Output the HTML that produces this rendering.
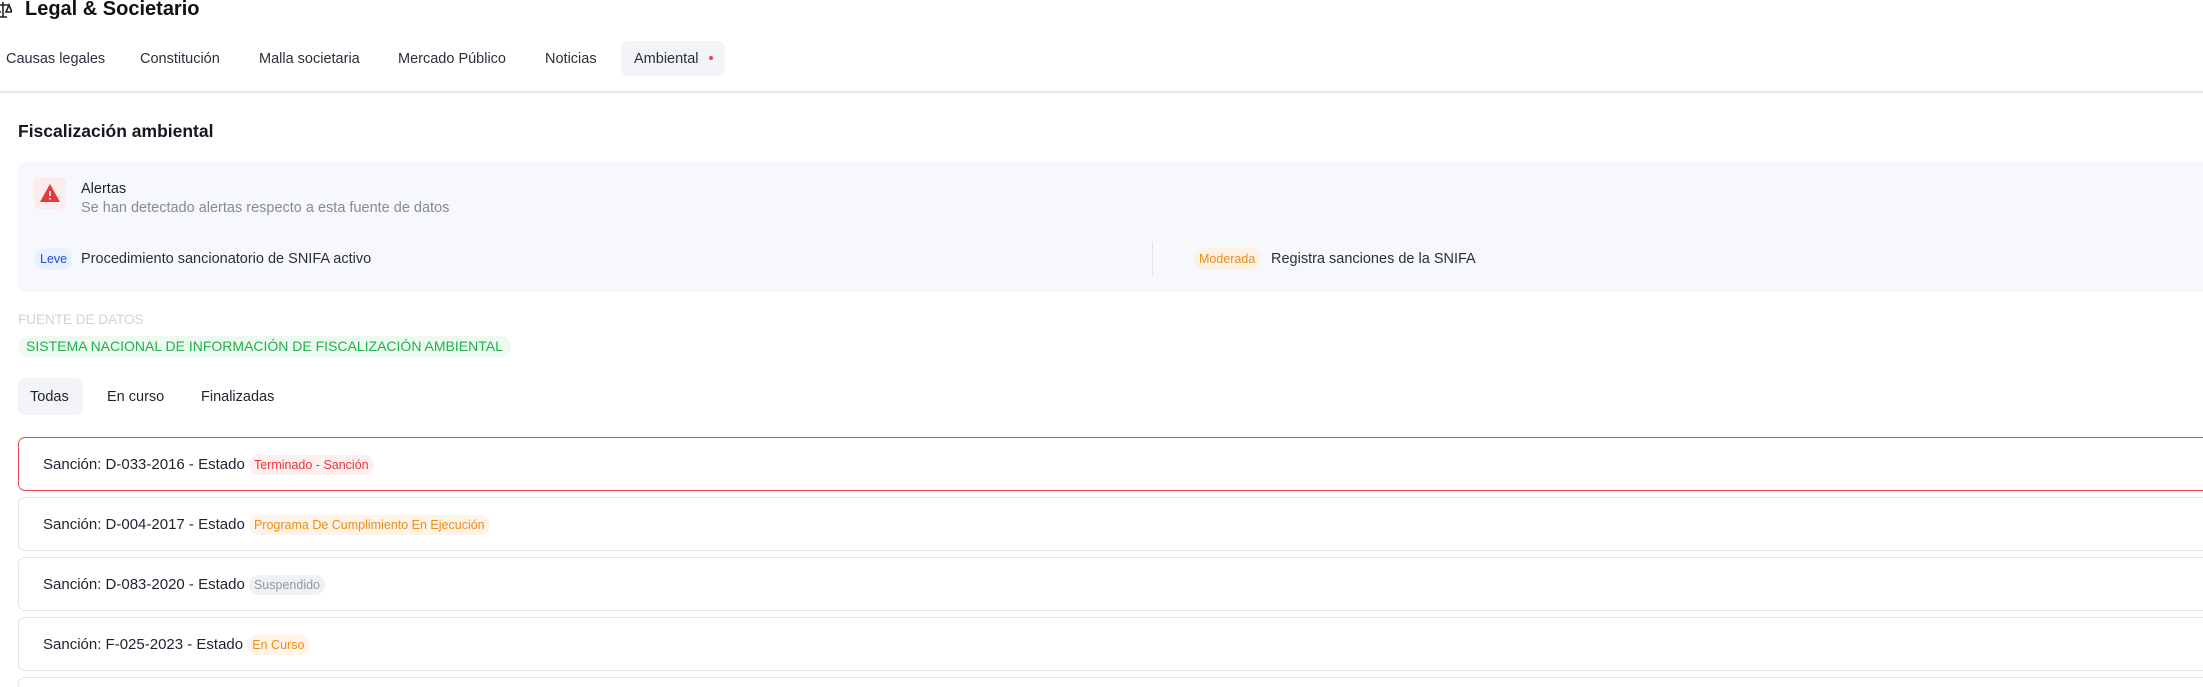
<!DOCTYPE html>
<html><head><meta charset="utf-8"><style>
*{box-sizing:border-box;margin:0;padding:0}
html,body{width:2203px;height:687px;overflow:hidden}
body{background:#fff;font-family:"Liberation Sans",sans-serif;color:#1f2330;position:relative}
.a{position:absolute;white-space:nowrap}
.tab{position:absolute;top:51px;font-size:14.5px;color:#2b2f3a}
.badge{display:inline-block;font-size:12.5px;padding:0 5px;height:20px;line-height:20px;border-radius:10px;vertical-align:middle}
.card{position:absolute;left:18px;width:2185px;height:54px;border:1.5px solid #e1e3e8;border-right:none;border-radius:7px 0 0 7px;}
.card span.t{position:absolute;left:24px;top:17px;font-size:15px;color:#1f2330}
</style></head><body>
<svg class="a" style="left:-6px;top:1px" width="18" height="18" viewBox="0 0 18 18" fill="none" stroke="#222" stroke-width="1.6"><path d="M9 1v15M3 4h12M3 4l-3 7h6zM15 4l-3 7h6zM5 16h8"/></svg>
<div class="a" style="left:25px;top:-2px;font-size:20px;font-weight:bold;color:#111">Legal &amp; Societario</div>
<div class="tab" style="left:6px">Causas legales</div>
<div class="tab" style="left:140px">Constitución</div>
<div class="tab" style="left:259px">Malla societaria</div>
<div class="tab" style="left:398px">Mercado Público</div>
<div class="tab" style="left:545px">Noticias</div>
<div class="a" style="left:621px;top:41px;width:104px;height:35px;background:#f3f4f8;border-radius:7px"></div>
<div class="tab" style="left:634px">Ambiental</div>
<div class="a" style="left:709px;top:56px;width:4px;height:4px;border-radius:2px;background:#e5484d"></div>
<div class="a" style="left:0;top:91px;width:2203px;height:1.5px;background:#e4e5ea"></div>
<div class="a" style="left:18px;top:121px;font-size:17.5px;font-weight:bold;color:#151821">Fiscalización ambiental</div>
<div class="a" style="left:18px;top:162px;width:2185px;height:130px;background:#f6f8fc;border-radius:7px 0 0 7px"></div>
<div class="a" style="left:34px;top:177px;width:32px;height:32px;background:#fdecec;border-radius:5px"></div>
<svg class="a" style="left:39px;top:183px" width="22" height="20" viewBox="0 0 22 20"><path d="M11 1L21 19H1z" fill="#e5383b"/><path d="M11 8v5M11 15v1.5" stroke="#fff" stroke-width="1.6"/></svg>
<div class="a" style="left:81px;top:181px;font-size:14.5px;color:#1f2330">Alertas</div>
<div class="a" style="left:81px;top:200px;font-size:14.5px;color:#868b97">Se han detectado alertas respecto a esta fuente de datos</div>
<div class="a" style="left:35px;top:248px"><span class="badge" style="background:#e9f0fd;color:#1d4ed8;height:22px;line-height:22px">Leve</span></div>
<div class="a" style="left:81px;top:251px;font-size:14.5px;color:#2b2f3a">Procedimiento sancionatorio de SNIFA activo</div>
<div class="a" style="left:1152px;top:242px;width:1px;height:35px;background:#e1e3e8"></div>
<div class="a" style="left:1194px;top:248px"><span class="badge" style="background:#fdf1e1;color:#f08c1c;height:22px;line-height:22px">Moderada</span></div>
<div class="a" style="left:1271px;top:251px;font-size:14.5px;color:#2b2f3a">Registra sanciones de la SNIFA</div>
<div class="a" style="left:18px;top:312px;font-size:13.5px;color:#d0d3da">FUENTE DE DATOS</div>
<div class="a" style="left:18px;top:336px;height:21px;line-height:21px;padding:0 8px;background:#eefaf1;color:#1fb14a;font-size:14px;border-radius:10px">SISTEMA NACIONAL DE INFORMACIÓN DE FISCALIZACIÓN AMBIENTAL</div>
<div class="a" style="left:18px;top:378px;width:65px;height:37px;background:#f3f4f8;border-radius:7px"></div>
<div class="a" style="left:30px;top:389px;font-size:14.5px">Todas</div>
<div class="a" style="left:107px;top:389px;font-size:14.5px">En curso</div>
<div class="a" style="left:201px;top:389px;font-size:14.5px">Finalizadas</div>
<div class="card" style="top:437px;border-color:#e5484d"><span class="t">Sanción: D-033-2016 - Estado <span class="badge" style="background:#fdeeef;color:#e5383b">Terminado - Sanción</span></span></div>
<div class="card" style="top:497px"><span class="t">Sanción: D-004-2017 - Estado <span class="badge" style="background:#fdf3e6;color:#f08c1c">Programa De Cumplimiento En Ejecución</span></span></div>
<div class="card" style="top:557px"><span class="t">Sanción: D-083-2020 - Estado <span class="badge" style="background:#f0f1f4;color:#9398a4">Suspendido</span></span></div>
<div class="card" style="top:617px"><span class="t">Sanción: F-025-2023 - Estado <span class="badge" style="background:#fdf3e6;color:#f08c1c">En Curso</span></span></div>
<div class="card" style="top:677px;height:10px;border-bottom:none;border-radius:7px 0 0 0"></div>
</body></html>
